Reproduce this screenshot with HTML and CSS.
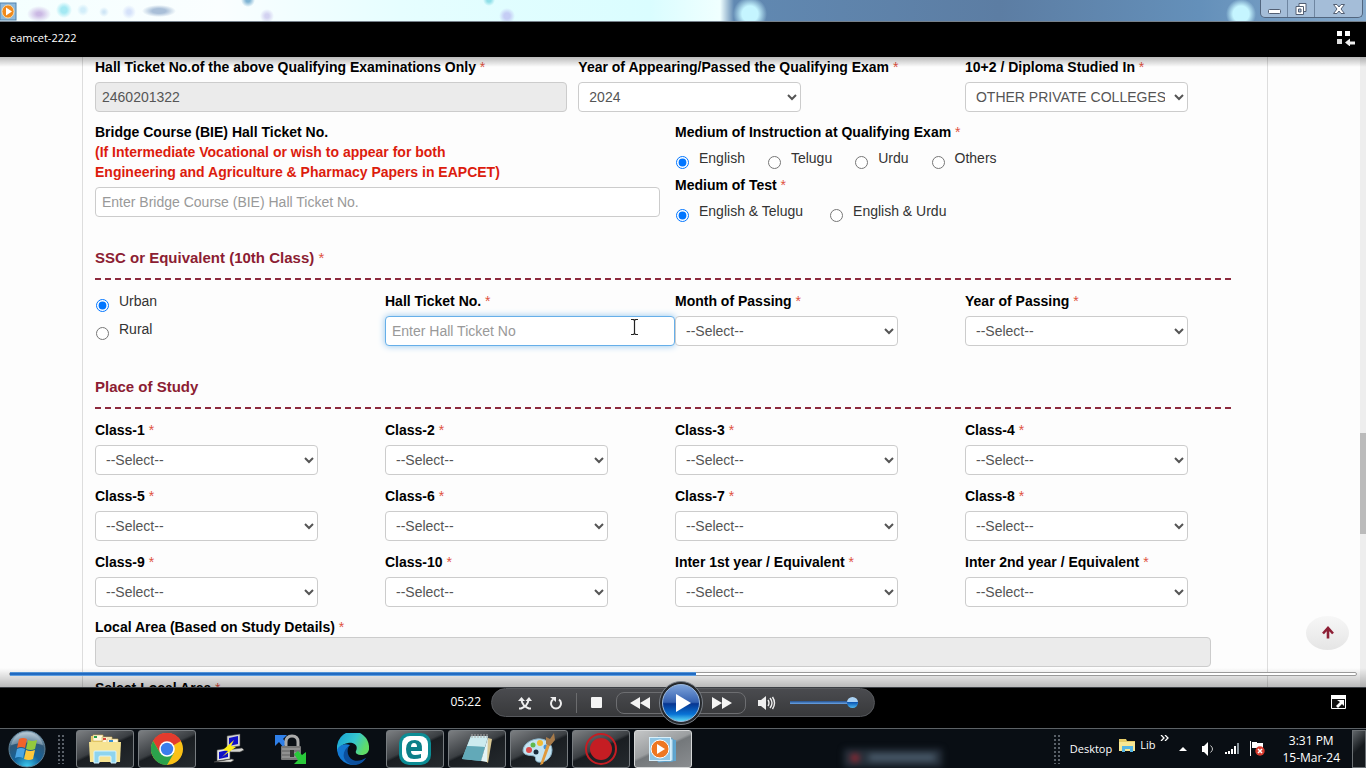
FILE: index.html
```html
<!DOCTYPE html>
<html lang="en">
<head>
<meta charset="utf-8">
<title>eamcet-2222</title>
<link rel="stylesheet" href="styles.css">
</head>
<body>
<header class="titlebar">
  <svg class="app-icon" width="17" height="19" viewBox="0 0 17 19"><rect x="0" y="1" width="16" height="17" fill="#8db9dc" stroke="#5384ad"/><ellipse cx="8" cy="9.500" rx="6" ry="6.500" fill="#f08a1c" stroke="#fbd9a4"/><path d="M6 5.500l6 4L6 13.500z" fill="#fff"/></svg>
  <div class="win-buttons">
    <button class="win-btn" aria-label="Minimize"><svg width="13" height="14" viewBox="0 0 13 14"><rect x=".5" y="7.500" width="12" height="4" rx="1" fill="#fff" stroke="#535f73"/></svg></button>
    <button class="win-btn" aria-label="Restore"><svg width="12" height="14" viewBox="0 0 12 14"><path d="M4 1.500h7v8H4z" fill="#fff" stroke="#535f73"/><path d="M1 4.500h7.500v8H1z" fill="#fff" stroke="#535f73"/><path d="M3.500 7h2.500v3H3.500z" fill="#a9bfd8" stroke="#535f73"/></svg></button>
    <button class="win-btn win-close" aria-label="Close"><svg width="12" height="14" viewBox="0 0 12 14"><path d="M.5 2.500h3.500L6 5l2-2.500h3.500L8 7l3.500 4.500H8L6 9l-2 2.500H.5L4 7z" fill="#fff" stroke="#535f73"/></svg></button>
  </div>
</header>
<div class="now-playing">
  <h1 class="video-title">eamcet-2222</h1>
  <button class="library-btn" aria-label="Switch to Library"><svg width="19" height="16" viewBox="0 0 19 16"><path fill="#fff" d="M0 1h5v5H0zM8 1h5v5H8z"/><path fill="#ddd" d="M0 9h5v5H0z"/><path fill="#eee" d="M8 12.500l5-4v3h5v3h-5v2z"/></svg></button>
</div>
<main class="video">
  <form class="form">
    <div class="row row-exam">
      <div class="field"><label for="hall">Hall Ticket No.of the above Qualifying Examinations Only <i>*</i></label><input id="hall" class="control wide" value="2460201322" disabled></div>
      <div class="field"><label for="yr">Year of Appearing/Passed the Qualifying Exam <i>*</i></label><select id="yr" class="control"><option>2024</option></select></div>
      <div class="field"><label for="studied">10+2 / Diploma Studied In <i>*</i></label><select id="studied" class="control"><option>OTHER PRIVATE COLLEGES</option></select></div>
    </div>
    <div class="row row-half">
      <div class="field"><label for="bridge">Bridge Course (BIE) Hall Ticket No.<span class="warn">(If Intermediate Vocational or wish to appear for both<br>Engineering and Agriculture &amp; Pharmacy Papers in EAPCET)</span></label><input id="bridge" class="control wide" placeholder="Enter Bridge Course (BIE) Hall Ticket No."></div>
      <div class="mediums">
        <fieldset class="choice"><legend>Medium of Instruction at Qualifying Exam <i>*</i></legend>
          <div class="options"><label class="radio"><input type="radio" name="moi" checked>English</label><label class="radio"><input type="radio" name="moi">Telugu</label><label class="radio"><input type="radio" name="moi">Urdu</label><label class="radio"><input type="radio" name="moi">Others</label></div>
        </fieldset>
        <fieldset class="choice"><legend>Medium of Test <i>*</i></legend>
          <div class="options options-test"><label class="radio"><input type="radio" name="mot" checked>English &amp; Telugu</label><label class="radio"><input type="radio" name="mot">English &amp; Urdu</label></div>
        </fieldset>
      </div>
    </div>
    <h2 class="section section-ssc">SSC or Equivalent (10th Class) <i>*</i></h2>
    <div class="row row-four">
      <div class="area"><label class="radio"><input type="radio" name="area" checked>Urban</label><label class="radio"><input type="radio" name="area">Rural</label></div>
      <div class="field"><label for="ssc">Hall Ticket No. <i>*</i></label><input id="ssc" class="control full active" placeholder="Enter Hall Ticket No"></div>
      <div class="field"><label for="mp">Month of Passing <i>*</i></label><select id="mp" class="control"><option>--Select--</option></select></div>
      <div class="field"><label for="yp">Year of Passing <i>*</i></label><select id="yp" class="control"><option>--Select--</option></select></div>
    </div>
    <h2 class="section">Place of Study</h2>
    <div class="row row-four">
      <div class="field"><label for="c1">Class-1 <i>*</i></label><select id="c1" class="control"><option>--Select--</option></select></div>
      <div class="field"><label for="c2">Class-2 <i>*</i></label><select id="c2" class="control"><option>--Select--</option></select></div>
      <div class="field"><label for="c3">Class-3 <i>*</i></label><select id="c3" class="control"><option>--Select--</option></select></div>
      <div class="field"><label for="c4">Class-4 <i>*</i></label><select id="c4" class="control"><option>--Select--</option></select></div>
      <div class="field"><label for="c5">Class-5 <i>*</i></label><select id="c5" class="control"><option>--Select--</option></select></div>
      <div class="field"><label for="c6">Class-6 <i>*</i></label><select id="c6" class="control"><option>--Select--</option></select></div>
      <div class="field"><label for="c7">Class-7 <i>*</i></label><select id="c7" class="control"><option>--Select--</option></select></div>
      <div class="field"><label for="c8">Class-8 <i>*</i></label><select id="c8" class="control"><option>--Select--</option></select></div>
      <div class="field"><label for="c9">Class-9 <i>*</i></label><select id="c9" class="control"><option>--Select--</option></select></div>
      <div class="field"><label for="c10">Class-10 <i>*</i></label><select id="c10" class="control"><option>--Select--</option></select></div>
      <div class="field"><label for="i1">Inter 1st year / Equivalent <i>*</i></label><select id="i1" class="control"><option>--Select--</option></select></div>
      <div class="field"><label for="i2">Inter 2nd year / Equivalent <i>*</i></label><select id="i2" class="control"><option>--Select--</option></select></div>
    </div>
    <div class="row local">
      <div class="field"><label for="la">Local Area (Based on Study Details) <i>*</i></label><input id="la" class="control full" disabled></div>
      <div class="field"><label>Select Local Area <i>*</i></label></div>
    </div>
  </form>
  <div class="scrollbar"><div class="thumb"></div></div>
  <button class="to-top" aria-label="Back to top"><svg width="14" height="14" viewBox="0 0 14 14"><path d="M7 12.500V2M2 7.500L7 2l5 5.500" fill="none" stroke="#8d1f35" stroke-width="2.600"/></svg></button>
  <svg class="cursor" width="9" height="18" viewBox="0 0 9 18"><path d="M1 1.500h2.500l1 1 1-1H8M4.500 2.500v13M1 16.500h2.500l1-1 1 1H8" fill="none" stroke="#222" stroke-width="1.200"/></svg>
  <div class="shade-top"></div>
  <div class="shade-bottom"></div>
  <div class="seek"><div class="seek-done"></div></div>
</main>
<section class="player">
  <div class="elapsed">05:22</div>
  <div class="pill">
    <button class="pbtn" aria-label="Shuffle"><svg width="14" height="14" viewBox="0 0 14 14"><path d="M1 12.500h2C7 11 10 8 10.500 4M13 12.500h-2C7 11 4 8 3.500 4" fill="none" stroke="#eee" stroke-width="2"/><path d="M0 5l3.500-4L7 5zM7.500 5L11 1l3 4z" fill="#eee"/></svg></button>
    <button class="pbtn" aria-label="Repeat"><svg width="14" height="14" viewBox="0 0 14 14"><path d="M4 3.500a5 5 0 1 0 6 0" fill="none" stroke="#eee" stroke-width="2"/><path d="M1 1h6v5z" fill="#eee"/></svg></button>
    <span class="divider"></span>
    <button class="pbtn stop" aria-label="Stop"><svg width="11" height="11" viewBox="0 0 11 11"><rect width="11" height="11" rx="1" fill="#f4f4f4"/></svg></button>
    <div class="transport">
      <button class="pbtn" aria-label="Previous"><svg width="20" height="12" viewBox="0 0 20 12"><path d="M10 0v12L0 6zM20 0v12L10 6z" fill="#f4f4f4"/></svg></button>
      <button class="play" aria-label="Play"><svg width="46" height="46" viewBox="0 0 46 46"><defs><linearGradient id="pg" x1="0" y1="0" x2="0" y2="1"><stop offset="0" stop-color="#7fa5dc"/><stop offset=".48" stop-color="#3561b0"/><stop offset=".52" stop-color="#073590"/><stop offset=".8" stop-color="#0872d5"/><stop offset="1" stop-color="#62def5"/></linearGradient></defs><circle cx="23" cy="23" r="21.500" fill="#25282c" stroke="#7b8189"/><circle cx="23" cy="23" r="18.500" fill="url(#pg)" stroke="#9cb9dc"/><path d="M18 14l15 9-15 9z" fill="#fff"/></svg></button>
      <button class="pbtn" aria-label="Next"><svg width="20" height="12" viewBox="0 0 20 12"><path d="M0 0v12l10-6zM10 0v12l10-6z" fill="#f4f4f4"/></svg></button>
    </div>
    <button class="pbtn mute" aria-label="Mute"><svg width="18" height="14" viewBox="0 0 18 14"><path d="M0 4h3l5-4v14l-5-4H0z" fill="#eee"/><path d="M10 4q2 3 0 6M12 2q4 5 0 10M14.500 1q4 6 0 12" fill="none" stroke="#eee" stroke-width="1.400"/></svg></button>
    <input class="volume" type="range" min="0" max="100" value="100" aria-label="Volume">
  </div>
  <div class="player-end"><button class="pbtn" aria-label="View full screen"><svg width="15" height="14" viewBox="0 0 15 14"><path d="M.5.500h14v13H.5z" fill="#111" stroke="#fff"/><path d="M0 0h15v4H0z" fill="#fff"/><path d="M6 5h7v6l-2-2-4 4-2-2 4-4z" fill="#fff"/></svg></button></div>
</section>
<footer class="taskbar">
  <button class="start" aria-label="Start"><svg width="38" height="38" viewBox="0 0 38 38"><defs><radialGradient id="orb" cx=".5" cy="1" r=".95"><stop offset="0" stop-color="#3fd0f4"/><stop offset=".4" stop-color="#14639b"/><stop offset=".75" stop-color="#2f5878"/><stop offset="1" stop-color="#9fb6c6"/></radialGradient></defs><circle cx="19" cy="19" r="18" fill="url(#orb)" stroke="#5f8298"/><path d="M3 15a16.500 16.500 0 0 1 32 0q-16-5-32 0z" fill="#dceaf2" opacity=".35"/><path d="M11 9q4-2 8 0l-2 9q-4-2-8 0z" fill="#f0622a"/><path d="M20 10q4 2 9 0l-2 9q-4 2-9 0z" fill="#92c83e"/><path d="M9 19q4-2 8 0l-2 9q-4-2-8 0z" fill="#4aa5e4"/><path d="M18 20q4 2 9 0l-2 9q-4 2-9 0z" fill="#fdc83c"/></svg></button>
  <span class="grip"></span>
  <div class="apps">
    <button class="app open" aria-label="Windows Explorer"><svg width="34" height="32" viewBox="0 0 34 32"><path d="M3 3h8l2 3h17v23H2z" fill="#e9cf6c"/><path d="M5 2h10v6H5zM14 4h10v6H14zM19 6h11v6H19z" fill="#fff8df" stroke="#d1b04f" stroke-width=".6"/><path d="M6 3h3v2H6z" fill="#27a04c"/><path d="M15 5h3v2h-3z" fill="#d9463b"/><path d="M21 7h4v2h-4z" fill="#3a8fd0"/><path d="M1 9h32l-1 20H2z" fill="#f6e391"/><path d="M6 30V19q0-1 1-1h20q1 0 1 1v11h-5v-6q0-1-1-1H12q-1 0-1 1v6z" fill="#8ed4ee" stroke="#d6f4ff"/></svg></button>
    <button class="app open" aria-label="Google Chrome"><svg width="32" height="32" viewBox="0 0 32 32"><circle cx="16" cy="16" r="16" fill="#fbc116"/><path d="M16 16L2.140 8A16 16 0 0 1 29.860 8z" fill="#e33b2e"/><path d="M16 8h13.860A16 16 0 0 0 2.140 8l6.930 12z" fill="#e33b2e"/><path d="M2.140 8A16 16 0 0 0 16 32l6.930-12H9.070z" fill="#2ba24c"/><circle cx="16" cy="16" r="7.800" fill="#fff"/><circle cx="16" cy="16" r="6.200" fill="#3b7ded"/></svg></button>
    <button class="app" aria-label="PuTTY"><svg width="32" height="32" viewBox="0 0 32 32"><g stroke="#444" stroke-width=".6"><path d="M14 3l13-2v12l-13 2zM13 17l16-2 2 2-4 2H14z" fill="#d5d5d0"/><path d="M4 17l13-2v11l-13 2zM1 29h17l3-2-2-1z" fill="#e7e7e2"/></g><path d="M16 5l9-2v8l-9 2zM6 19l9-2v7l-9 2z" fill="#1010c8"/><path d="M21 7l-11 10 5 1-6 6 14-10-5-1z" fill="#ffef18"/></svg></button>
    <button class="app" aria-label="VPN client"><svg width="34" height="32" viewBox="0 0 34 32"><path d="M1 2h12L9 6l4 4-4 4-4-5-4 4z" fill="#2f7fe8"/><path d="M12 16V9q0-6 6-6t6 6v7" fill="none" stroke="#aaa" stroke-width="3"/><rect x="7" y="13" width="20" height="14" rx="1" fill="#777"/><path d="M8 16h18M8 20h18M8 24h18" stroke="#aaa"/><path d="M16 17h4v7h-4z" fill="#333"/><path d="M20 21l4-3 4 4 4-3v12H20l4-4z" fill="#29c93a"/></svg></button>
    <button class="app" aria-label="Microsoft Edge"><svg width="32" height="32" viewBox="0 0 32 32"><defs><linearGradient id="eg" x1="0" y1="0" x2="1" y2=".4"><stop offset="0" stop-color="#159fd5"/><stop offset=".6" stop-color="#35c6cf"/><stop offset="1" stop-color="#60dc66"/></linearGradient></defs><path d="M0 16A16 16 0 0 1 32 13c1 6-3 9-8 9-4 0-6-2-5-4 3-7-4-9-8-8-6 1-10 5-11 9z" fill="url(#eg)"/><path d="M0 17C2 12 8 10 13 12c-5 4-5 13 3 16 5 2 9 0 13-3A16 16 0 0 1 0 17z" fill="#1478d1"/><path d="M13 12c-4 4-3 12 3 15 5 2 9 0 13-2-4 7-11 8-16 6-9-4-8-14 0-19z" fill="#0b4f9d"/></svg></button>
    <button class="app open" aria-label="ESET"><svg width="32" height="32" viewBox="0 0 32 32"><rect width="32" height="32" rx="10" fill="#0c8d95"/><rect x="3" y="3" width="26" height="26" rx="8" fill="#fff"/><path d="M23 18H12q0 4 4 4 3 0 6-1v4q-3 1-7 1-8 0-8-10 0-9 9-9 8 0 7 11zM12 14h6q0-4-3-4t-3 4z" fill="#0c7f88"/></svg></button>
    <button class="app open" aria-label="Notepad"><svg width="32" height="32" viewBox="0 0 32 32"><path d="M27 5l4 1-4 24-4-3z" fill="#d8c793"/><path d="M10 3h17l-7 25L1 26z" fill="#7bbfcb"/><path d="M10 3h17l-3 11-18-1z" fill="#cdebef"/><path d="M6 13l18 1-4 14L1 26z" fill="#62a9b8"/><path d="M27 4l-1 25-6-1z" fill="#e4f3f5"/><path d="M11 1v4M14 1v4M17 1v4M20 1v4M23 1v4M26 1v4" stroke="#aaa"/></svg></button>
    <button class="app open" aria-label="Paint"><svg width="34" height="32" viewBox="0 0 34 32"><path d="M15 6c8-1 15 4 15 11 0 9-8 13-14 12-4-1-1-5-4-6-4-1-10 0-11-5C1 12 7 7 15 6z" fill="#c4e4f2" stroke="#8ab4ca"/><circle cx="7" cy="17" r="3" fill="#db4b4b"/><circle cx="11" cy="12" r="2.500" fill="#61b94c"/><circle cx="18" cy="10" r="3" fill="#f0ba36"/><circle cx="14" cy="19" r="2.500" fill="#1b2c3c"/><circle cx="24" cy="14" r="2.500" fill="#4692d6"/><path d="M25 11l3 1-7 19-3 1z" fill="#e09a3d"/><path d="M24 4l4 2 4-6 1 7-5 6-4-2z" fill="#a67a4a"/></svg></button>
    <button class="app open" aria-label="Screen recorder"><svg width="32" height="32" viewBox="0 0 32 32"><circle cx="16" cy="16" r="15" fill="none" stroke="#c51d23" stroke-width="2"/><circle cx="16" cy="16" r="11" fill="#c51d23"/></svg></button>
    <button class="app open current" aria-label="Windows Media Player"><svg width="30" height="28" viewBox="0 0 30 28"><path d="M12 3l16 2v21l-16 1z" fill="#5fa5cf"/><path d="M10 2l15 2v22l-15 1z" fill="#c6e4f4" stroke="#5c9fc8"/><rect x="1.500" y="2.500" width="21" height="23" fill="#8fc5e4" stroke="#d7effb"/><circle cx="12" cy="14" r="9" fill="#ee7722" stroke="#fff"/><path d="M9 9l8 5-8 5z" fill="#fff"/></svg></button>
  </div>
  <div class="ghost"><span class="ghost-dot"></span><span class="ghost-bar"></span></div>
  <div class="tray">
    <span class="grip"></span>
    <span class="desk">Desktop</span>
    <a class="lib" href="#"><svg width="17" height="14" viewBox="0 0 17 14"><path d="M0 1h7l1 2h8v10H0z" fill="#e6cb66"/><path d="M0 4h16v9H0z" fill="#f8e793"/><path d="M3 14V8h11v6h-3v-3H6v3z" fill="#55b5e4"/></svg><span>Lib</span></a>
    <svg class="more" width="9" height="6" viewBox="0 0 9 6"><path d="M1 0l3 3-3 3M5 0l3 3-3 3" fill="none" stroke="#fff" stroke-width="1.300"/></svg>
    <div class="status">
      <svg width="8" height="4" viewBox="0 0 8 4"><path d="M0 4l4-4 4 4z" fill="#fff"/></svg>
      <svg width="13" height="14" viewBox="0 0 13 14"><path d="M0 4h2l4-4v14l-4-4H0z" fill="#fff"/><path d="M8.500 3.500q4 3.500 0 7" fill="none" stroke="#ccc"/></svg>
      <svg width="15" height="12" viewBox="0 0 15 12"><path d="M0 9h2v2H0zM3 8h2v3H3zM6 6h2v5H6zM9 3h2v8H9z" fill="#fff"/><path d="M12 0h2v11h-2z" fill="#88939b"/></svg>
      <svg width="15" height="15" viewBox="0 0 15 15"><path d="M0 0h1v15H0zM2 1h5v1h6v6H8V7H2z" fill="#fff"/><circle cx="10" cy="10" r="4.700" fill="#d73a2e"/><path d="M8 8l4 4M12 8l-4 4" stroke="#fff" stroke-width="1.500"/></svg>
    </div>
    <div class="clock"><span>3:31 PM</span><span>15-Mar-24</span></div>
    <button class="show-desktop" aria-label="Show desktop"></button>
  </div>
</footer>
</body>
</html>
```
FILE: styles.css
```css
* { box-sizing: border-box; }
html, body { height: 100%; }
body {
  margin: 0;
  display: flex;
  flex-direction: column;
  overflow: hidden;
  background: #000;
  color: #fff;
  font-family: "Open Sans", "Noto Sans", sans-serif;
  font-size: 12px;
}
button { border: 0; padding: 0; background: none; font: inherit; color: inherit; }
svg { display: block; }

/* Window frame */
.titlebar {
  flex: 0 0 22px;
  display: flex;
  justify-content: space-between;
  align-items: flex-start;
  overflow: hidden;
  background:
    radial-gradient(circle at 750px 14px, #c5f5ff 0 8px, transparent 17px),
    radial-gradient(circle at 1241px 14px, #c5f5ff 0 8px, transparent 15px),
    radial-gradient(circle at 248px 0, #7fb4d4 0 2px, transparent 7px),
    radial-gradient(circle at 489px 0, #8fdfe8 0 2px, transparent 6px),
    radial-gradient(ellipse 12px 8px at 39px 14px, #cbb9e4 0 20%, transparent),
    radial-gradient(circle at 64px 10px, #a4e9f3 0 3px, transparent 8px),
    radial-gradient(circle at 83px 10px, #d3eefa 0 2px, transparent 6px),
    radial-gradient(circle at 104px 12px, #cfe6f6 0 1px, transparent 5px),
    radial-gradient(circle at 129px 12px, #d6e2fa 0 2px, transparent 7px),
    radial-gradient(ellipse 17px 6px at 159px 11px, #a9bfd8 0 40%, transparent),
    radial-gradient(circle at 267px 16px, #d3d2f1 0 2px, transparent 7px),
    radial-gradient(circle at 507px 16px, #c5cdf5 0 3px, transparent 8px),
    linear-gradient(90deg, #f4ffff 0, #fafeff 220px, #e6feff 400px, #dafdff 650px, #f0ffff 720px, #6189b2 734px, #5c7da3 1000px, #6490ba 1200px, #86aacc 1366px);
  border-bottom: 1px solid #76808a;
}
.app-icon { margin-top: 2px; }
.win-buttons {
  display: flex;
  height: 18px;
  margin-right: 3px;
  border: 1px solid #52667f;
  border-top: 0;
  border-radius: 0 0 5px 5px;
  background: #a4bdd8;
}
.win-btn { width: 27px; display: grid; place-items: center; border-right: 1px solid #6f86a1; }
.win-close { width: 47px; border-right: 0; }
.now-playing {
  flex: 0 0 35px;
  display: flex;
  align-items: flex-start;
  justify-content: space-between;
  padding: 8px 10px 0;
}
.video-title { margin: 0; font-size: 11px; font-weight: 400; line-height: 16px; }

/* Recorded web page */
.video {
  position: relative;
  flex: 1;
  min-height: 0;
  display: flex;
  overflow: hidden;
  background: #fdfdfd;
  color: #333;
  font: 14px/20px "Liberation Sans", Arial, sans-serif;
}
.form {
  flex: 1;
  align-self: flex-start;
  margin: 0 92px 0 82px;
  padding: 0 12px;
  border: 1px solid #ddd;
  border-width: 0 1px;
}
.row { display: grid; row-gap: 11px; }
.row-exam { grid-template-columns: 5fr 4fr 3fr; margin-bottom: 10px; }
.row-half { grid-template-columns: 1fr 1fr; }
.row-four { grid-template-columns: repeat(4, 1fr); }
.field { min-width: 0; color: #000; }
.field > label, .choice legend { display: block; margin-bottom: 5px; padding: 0; color: #000; font-weight: 700; }
i { color: #e0523f; font-style: normal; font-weight: 400; }
.warn { display: block; color: #dc1c0d; }
.control {
  display: block;
  width: 100%;
  max-width: 223px;
  height: 30px;
  margin: 0;
  padding: 4px 6px;
  border: 1px solid #ccc;
  border-radius: 4px;
  background: #fff;
  color: #555;
  font: 14px/20px "Liberation Sans", Arial, sans-serif;
}
.control.wide { width: calc(100% - 11px); max-width: 565px; }
.control.full { max-width: 1116px; }
.control:disabled { background: #ebebeb; opacity: 1; }
.control::placeholder { color: #999; }
.control.active { border-color: #66afe9; box-shadow: 0 0 7px #8fc4ee; }
.choice { margin: 0; padding: 0; border: 0; }
.choice legend { margin: 0; }
.radio { display: flex; color: #333; }
.radio input { width: 13px; height: 13px; margin: 8px 10px 0 1px; }
.options { display: flex; gap: 22px; padding: 6px 0; }
.options-test { gap: 26px; }
.section {
  width: 98%;
  margin: 31px 0 11px;
  padding-bottom: 12px;
  background: repeating-linear-gradient(90deg, #8d2a3e 0 6px, transparent 6px 10px) bottom / 100% 2px no-repeat;
  color: #8c1d33;
  font-size: 15px;
  line-height: 20px;
}
.section-ssc { margin-top: 20px; }
.area { display: grid; gap: 7px; align-content: start; }
.local { margin-top: 10px; }
.local .field > label { margin-bottom: 0; }
.scrollbar { flex: 0 0 6px; padding-top: 376px; background: #eee; }
.thumb { height: 101px; background: #bbb; }
.to-top {
  position: absolute;
  right: 17px;
  bottom: 38px;
  width: 43px;
  height: 34px;
  display: grid;
  place-items: center;
  border-radius: 50%;
  background: linear-gradient(#f7f7f7, #e5e5e5);
}
.cursor { position: absolute; left: 630px; top: 261px; }
.shade-top { position: absolute; inset: 0 0 auto; height: 10px; background: linear-gradient(#0004, #0000); }
.shade-bottom { position: absolute; inset: auto 0 0; height: 20px; border-bottom: 1px solid #3b3f44; background: linear-gradient(#0000, #0004); }
.seek {
  position: absolute;
  left: 9px;
  right: 9px;
  bottom: 12px;
  height: 4px;
  border: 1px solid #999;
  border-radius: 2px;
  background: #fff;
}
.seek-done { width: 51%; height: 4px; margin-top: -1px; background: linear-gradient(#69a7e2, #0754b4 50%, #78b7f0); }

/* Player controls */
.player { position: relative; flex: 0 0 40px; display: grid; grid-template-columns: 1fr 384px 1fr; }
.elapsed { justify-self: end; padding: 6px 10px 0 0; line-height: 16px; }
.pill {
  display: flex;
  align-items: center;
  height: 29px;
  padding: 0 14px 0 26px;
  border: 1px solid #57595d;
  border-radius: 15px;
  background: linear-gradient(#4a4b4f, #38393b);
}
.pbtn { display: grid; place-items: center; }
.pill > .pbtn + .pbtn { margin-left: 17px; }
.divider { width: 1px; height: 20px; margin-left: 13px; background: #6b6c6e; }
.stop { margin-left: 14px; }
.transport {
  display: flex;
  align-items: center;
  justify-content: space-between;
  width: 130px;
  height: 22px;
  margin-left: 14px;
  padding: 0 13px;
  border: 1px solid #6d6e71;
  border-radius: 8px;
}
.play { margin: -12px 0; }
.mute { margin-left: 12px; }
.volume {
  appearance: none;
  width: 68px;
  height: 12px;
  margin: 0 0 0 14px;
  background: linear-gradient(#24508c, #6aa5e8) center / 100% 3px no-repeat;
}
.volume::-webkit-slider-thumb { appearance: none; width: 11px; height: 11px; border-radius: 50%; background: linear-gradient(#aad2f4 45%, #0d59b5 50%, #4db8ef); }
.player-end { justify-self: end; padding: 7px 20px 0 0; }

/* Taskbar */
.taskbar {
  position: relative;
  flex: 0 0 40px;
  display: flex;
  align-items: center;
  border-top: 1px solid #5d6266;
  background: #090e14;
}
.start { margin-left: 8px; }
.grip { width: 8px; height: 30px; background: radial-gradient(circle, #596068 1px, transparent 1px) 0 0 / 4px 4px; }
.start + .grip { margin: 0 11px; }
.apps { display: flex; gap: 4px; height: 38px; }
.app { width: 58px; display: grid; place-items: center; border: 1px solid transparent; border-radius: 3px; }
.app.open { border-color: #777c80; background: linear-gradient(155deg, #7c7f82 0, #3b3f43 45%, #1a1e22 50%, #252a2e 100%); }
.app.open.current { border-color: #d5d7d8; background: linear-gradient(155deg, #c4c6c7 0, #9b9ea0 45%, #74787b 50%, #8a8d90 100%); }
.ghost {
  display: flex;
  align-items: center;
  gap: 10px;
  margin: 18px 0 0 152px;
  padding: 5px 7px;
  background: #26303b;
  filter: blur(3px);
}
.ghost-dot { width: 8px; height: 8px; border-radius: 50%; background: #9d2630; }
.ghost-bar { width: 66px; height: 7px; background: #4a5b6b; }
.tray { display: flex; align-items: center; height: 100%; margin-left: auto; }
.desk { margin-left: 9px; font-size: 11px; line-height: 16px; }
.lib { display: flex; align-items: center; gap: 4px; margin: 0 0 8px 7px; color: #fff; font-size: 11px; line-height: 16px; text-decoration: none; }
.more { margin: 0 0 22px 5px; }
.status { display: flex; align-items: center; gap: 10px; margin-left: 10px; }
.status > :first-child { margin-right: 5px; }
.clock { display: flex; flex-direction: column; align-items: center; margin: 0 12px 0 17px; line-height: 17px; }
.show-desktop { width: 14px; height: 38px; border: 1px solid #6b7074; background: linear-gradient(135deg, #61666a, #15191d 50%); }
```
